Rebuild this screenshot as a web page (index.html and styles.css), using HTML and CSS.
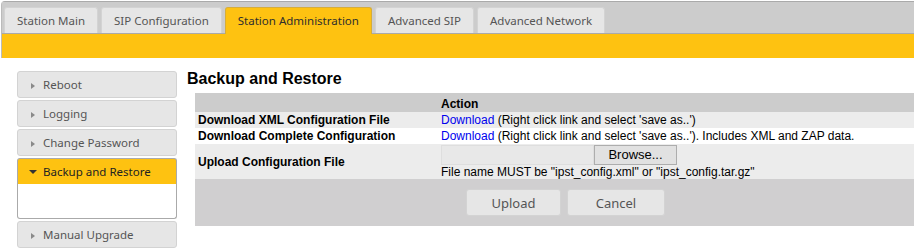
FILE: index.html
```html
<!DOCTYPE html>
<html>
<head>
    <title>Station Administration</title>
    <link rel="stylesheet" href="styles.css">
</head>
<body>
    <div class="tabs">
        <ul class="tab-nav">
            <li><a href="#">Station Main</a></li>
            <li><a href="#">SIP Configuration</a></li>
            <li class="active"><a href="#">Station Administration</a></li>
            <li><a href="#">Advanced SIP</a></li>
            <li><a href="#">Advanced Network</a></li>
        </ul>
        <div class="tab-panel"></div>
    </div>

    <div class="main">
        <div class="menu">
            <div class="menu-item"><span class="arrow"></span>Reboot</div>
            <div class="menu-item"><span class="arrow"></span>Logging</div>
            <div class="menu-item"><span class="arrow"></span>Change Password</div>
            <div class="menu-item open"><span class="arrow"></span>Backup and Restore</div>
            <div class="menu-body"></div>
            <div class="menu-item"><span class="arrow"></span>Manual Upgrade</div>
        </div>

        <div class="content">
            <h2>Backup and Restore</h2>
            <table class="backup">
                <tr class="head">
                    <th class="col-label"></th>
                    <th>Action</th>
                </tr>
                <tr class="shade">
                    <td class="label">Download XML Configuration File</td>
                    <td><a href="#">Download</a> (Right click link and select 'save as..')</td>
                </tr>
                <tr>
                    <td class="label">Download Complete Configuration</td>
                    <td><a href="#">Download</a> (Right click link and select 'save as..'). Includes XML and ZAP data.</td>
                </tr>
                <tr class="shade upload-row">
                    <td class="label">Upload Configuration File</td>
                    <td>
                        <div class="file-input">
                            <span class="file-box"></span>
                            <span class="browse">Browse...</span>
                        </div>
                        <div>File name MUST be "ipst_config.xml" or "ipst_config.tar.gz"</div>
                    </td>
                </tr>
                <tr class="foot">
                    <td colspan="2">
                        <div class="actions">
                            <button class="btn btn-upload">Upload</button>
                            <button class="btn btn-cancel">Cancel</button>
                        </div>
                    </td>
                </tr>
            </table>
        </div>
    </div>
</body>
</html>
```

FILE: styles.css
```css
body {
    margin: 0;
    font-family: "Liberation Sans", Arial, sans-serif;
    overflow: hidden;
}
.tabs {
    margin: 1px 0 0 1px;
    border-top: 1px solid #aaa;
    border-left: 1px solid #bbb;
    border-radius: 4px 0 0 0;
}
.tab-nav {
    list-style: none;
    margin: 0;
    padding: 5px 0 0 2px;
    height: 26px;
    display: flex;
    align-items: flex-start;
    gap: 3px;
    background-color: #cccccc;
    border-bottom: 1px solid #aaa;
}
.tab-nav li {
    background-color: #e6e6e6;
    border: 1px solid #d3d3d3;
    border-bottom: none;
    border-radius: 3px 3px 0 0;
}
.tab-nav a {
    display: block;
    padding: 0 12px;
    line-height: 25px;
    font-family: "Noto Sans", sans-serif;
    font-size: 11.5px;
    color: #555;
    text-decoration: none;
}
.tab-nav li.active {
    background-color: #fec211;
    border-color: #d6ad3a;
}
.tab-nav li.active a {
    line-height: 26px;
    color: #2e2e2e;
}
.tab-panel {
    background-color: #fec211;
    height: 24px;
}
.main {
    display: flex;
    align-items: flex-start;
    gap: 10px;
    margin: 13px 0 0 17px;
}
.menu {
    width: 160px;
    flex-shrink: 0;
    display: flex;
    flex-direction: column;
    gap: 2px;
}
.menu-item {
    background-color: #e6e6e6;
    border: 1px solid #d3d3d3;
    border-radius: 3px;
    padding: 4px 0 4px 13px;
    line-height: 17px;
    font-family: "Noto Sans", sans-serif;
    font-size: 11.5px;
    color: #555;
}
.arrow {
    display: inline-block;
    width: 0;
    height: 0;
    border-left: 4px solid #8a8a8a;
    border-top: 3.5px solid transparent;
    border-bottom: 3.5px solid transparent;
    margin-right: 8px;
    vertical-align: 0;
}
.menu-item.open {
    background-color: #fec211;
    border-color: #aaa;
    border-bottom: none;
    border-radius: 3px 3px 0 0;
    padding: 4px 0 4px 11px;
    color: #222;
}
.menu-item.open .arrow {
    border-top: 4px solid #333;
    border-left: 4px solid transparent;
    border-right: 4px solid transparent;
    border-bottom: none;
    margin-right: 6px;
    vertical-align: 2px;
}
.menu-body {
    margin-top: -2px;
    height: 34px;
    background-color: white;
    border: 1px solid #aaa;
    border-top: none;
    border-radius: 0 0 3px 3px;
}
.content {
    flex: 1;
}
.content h2 {
    margin: 0 0 6px;
    font-size: 16px;
    line-height: 16px;
    font-weight: bold;
    color: #000;
}
.backup {
    margin-left: 8px;
    width: 719px;
    border-collapse: collapse;
    table-layout: fixed;
    font-size: 12px;
    line-height: 14px;
}
.backup th,
.backup td {
    padding: 1px 3px;
    text-align: left;
}
.backup .col-label {
    width: 237px;
}
.backup .head {
    background-color: #cccccc;
}
.backup .head th {
    padding-top: 4px;
}
.backup .shade {
    background-color: #ececec;
}
.backup .label {
    font-weight: bold;
}
.backup a {
    color: #0000ee;
    text-decoration: none;
}
.upload-row td {
    padding-bottom: 0;
}
.file-input {
    display: flex;
}
.file-box {
    width: 153px;
    height: 20px;
    box-sizing: border-box;
    background-color: #e8e8e8;
    border: 1px solid #dedede;
}
.browse {
    width: 83px;
    height: 20px;
    box-sizing: border-box;
    background-color: #e1e1e1;
    border: 1px solid #adadad;
    font-size: 13px;
    line-height: 18px;
    text-align: center;
    color: #000;
}
.backup .foot {
    background-color: #d0cfd0;
}
.backup .foot td {
    padding: 10px 0 10px 271px;
}
.actions {
    display: flex;
    gap: 6px;
}
.btn {
    height: 27px;
    background-color: #e6e6e6;
    border: 1px solid #d3d3d3;
    border-radius: 3px;
    font-family: "Noto Sans", sans-serif;
    font-size: 13px;
    color: #555;
    padding: 0;
}
.btn-upload {
    width: 95px;
}
.btn-cancel {
    width: 98px;
}
```
